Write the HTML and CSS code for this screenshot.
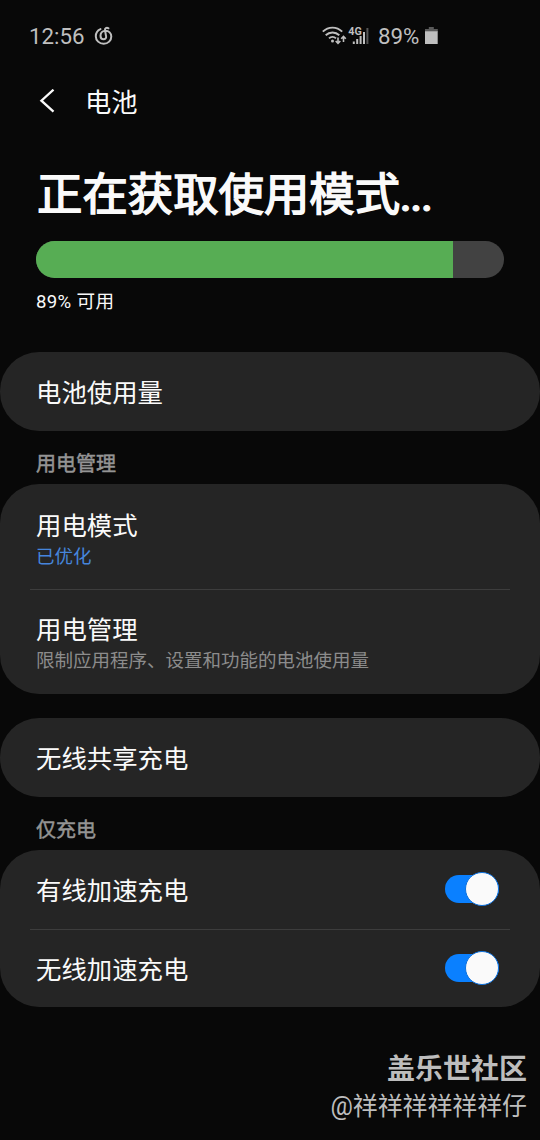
FILE: index.html
```html
<!DOCTYPE html>
<html lang="zh-CN">
<head>
<meta charset="utf-8">
<title>电池</title>
<link rel="stylesheet" href="styles.css">
</head>
<body>
<div class="screen">
  <header class="status">
    <span class="clock">12:56</span>
    <svg class="music" width="20" height="20" viewBox="0 0 20 20" fill="none" stroke="#bfbfbf" stroke-width="2" stroke-linecap="round">
      <path d="M6.500 3.100C3.500 4.400 1.800 7 1.800 10.200c0 4.300 3.500 7.600 7.900 7.600s7.600-3.300 7.600-7.300c0-3.400-2.500-5.700-5.800-5.700-3.100 0-5 2.300-5 4.900 0 2.200 1.300 3.600 3.200 3.600 1.700 0 2.700-1.300 2.400-3L11 4.300C10.700 2.300 12.500 1 14.500 2.300"/>
    </svg>
    <svg class="wifi" width="25" height="20" viewBox="0 0 25 20" fill="none" stroke="#bfbfbf" stroke-width="1.900">
      <path d="M.8 5.700C6.300.2 14.700.2 20.200 5.700M3.700 9.200c3.800-3.700 9.800-3.700 13.600 0M7 12.400c2-1.900 5-1.900 7 0"/>
      <circle cx="10.500" cy="15" r="1.500" fill="#bfbfbf" stroke="none"/>
      <path d="M16 11.500v5.800M13.700 15l2.300 2.400 2.300-2.400M21.500 16v-5.500M19.200 12.800l2.300-2.400 2.300 2.400" stroke-width="1.600"/>
    </svg>
    <svg class="signal" width="22" height="28" viewBox="0 -4 22 28">
      <text x="0.300" y="8.600" class="net" textLength="13.500" lengthAdjust="spacingAndGlyphs">4G</text>
      <g fill="#bfbfbf"><path d="M4.800 15.500h2V18h-2zM8.200 13h2v5h-2zM11.600 10h2v8h-2zM15 6h2v12h-2z"/></g>
      <path d="M18.400 2h2v16h-2z" fill="#555"/>
    </svg>
    <span class="percent">89%</span>
    <svg class="battery" width="13" height="18" viewBox="0 0 13 18">
      <path d="M3.800 0h5v2h4v3H0V2h3.800z" fill="#595959"/><path d="M0 4.300h12.700V17H0z" fill="#bfbfbf"/>
    </svg>
  </header>
  <nav class="bar">
    <svg class="back" width="16" height="25" viewBox="0 0 16 25" fill="none" stroke="#fafafa" stroke-width="2.300"><path d="M14.500 .7L2.400 11.700 14.500 22.700"/></svg>
    <span class="bar-title">电池</span>
  </nav>
  <section class="summary">
    <h1>正在获取使用模式<span class="dots">...</span></h1>
    <div class="meter"><div class="fill" style="width:89%"></div></div>
    <p class="available">89% 可用</p>
  </section>
  <section class="card"><div class="row">电池使用量</div></section>
  <h2>用电管理</h2>
  <section class="card">
    <div class="row tall"><span>用电模式</span><small class="accent">已优化</small></div>
    <div class="row tall"><span>用电管理</span><small>限制应用程序、设置和功能的电池使用量</small></div>
  </section>
  <section class="card spaced"><div class="row">无线共享充电</div></section>
  <h2>仅充电</h2>
  <section class="card">
    <div class="row switchable"><span>有线加速充电</span><i class="toggle"></i></div>
    <div class="row switchable"><span>无线加速充电</span><i class="toggle"></i></div>
  </section>
  <footer class="credit"><strong>盖乐世社区</strong><span>@祥祥祥祥祥祥仔</span></footer>
</div>
</body>
</html>
```
FILE: styles.css
```css
* { box-sizing: border-box; }
body { margin: 0; background: #080808; color: #fafafa; font-family: Roboto, "Noto Sans CJK SC", sans-serif; }
.screen { width: 540px; height: 1140px; display: flex; flex-direction: column; overflow: hidden; }
.status { height: 72px; flex: none; display: flex; align-items: center; padding-left: 29px; color: #bfbfbf; font-size: 22.3px; }
.clock { width: 65px; }
.music { margin-right: 208px; }
.wifi { margin-right: 1px; }
.signal { margin-right: 8px; }
.net { font: bold 11.5px Roboto, sans-serif; fill: #bfbfbf; }
.percent { width: 47px; }
.bar { height: 58px; flex: none; display: flex; align-items: center; padding-left: 39px; }
.bar-title { margin-left: 30px; padding-top: 3px; font-size: 26.3px; line-height: 36px; }
.summary { height: 222px; flex: none; padding: 33px 36px 0; }
h1 { margin: 0; height: 66px; padding-left: 1px; line-height: 66px; font-size: 45.4px; font-weight: 400; -webkit-text-stroke: 1.5px #fafafa; white-space: nowrap; }
.dots { font-size: 37px; font-weight: 700; -webkit-text-stroke: 1px #fafafa; }
.meter { margin-top: 12px; height: 37px; border-radius: 19px; background: #424242; overflow: hidden; }
.fill { height: 100%; background: #57ad54; }
.available { margin: 11px 0 0; font-size: 18.6px; line-height: 26px; letter-spacing: 0.35px; }
.card { flex: none; background: #252525; border-radius: 39px; padding: 0 30px; }
.spaced { margin-top: 24px; }
.row { height: 78.5px; padding: 4px 6px 0; display: flex; align-items: center; font-size: 25.4px; line-height: 36px; }
.row + .row { border-top: 1.5px solid #3d3d3d; }
.tall { height: 105px; padding-top: 4px; flex-direction: column; align-items: flex-start; justify-content: center; }
.tall + .tall { padding-top: 2px; }
.row small { font-size: 18.5px; line-height: 26px; color: #8c8c8c; }
.row small.accent { color: #4685dc; }
.switchable { justify-content: space-between; }
.toggle { width: 54px; height: 28px; margin: -4px 5px 0 0; border-radius: 14px; background: #0a80ff; display: flex; justify-content: flex-end; align-items: center; }
.toggle::after { content: ""; width: 32px; height: 32px; flex: none; border-radius: 50%; background: #fafafa; border: 1px solid #0a70df; }
h2 { flex: none; height: 53.5px; margin: 0; padding: 12px 36px 0; color: #949494; font-size: 20px; line-height: 42px; font-weight: 400; -webkit-text-stroke: 0.5px #949494; }
.credit { margin-top: auto; padding: 0 13px 15px 0; display: flex; flex-direction: column; align-items: flex-end; color: #bdbdbd; }
.credit strong { font-size: 28px; line-height: 38px; }
.credit span { font-size: 24.9px; line-height: 36px; }
```
